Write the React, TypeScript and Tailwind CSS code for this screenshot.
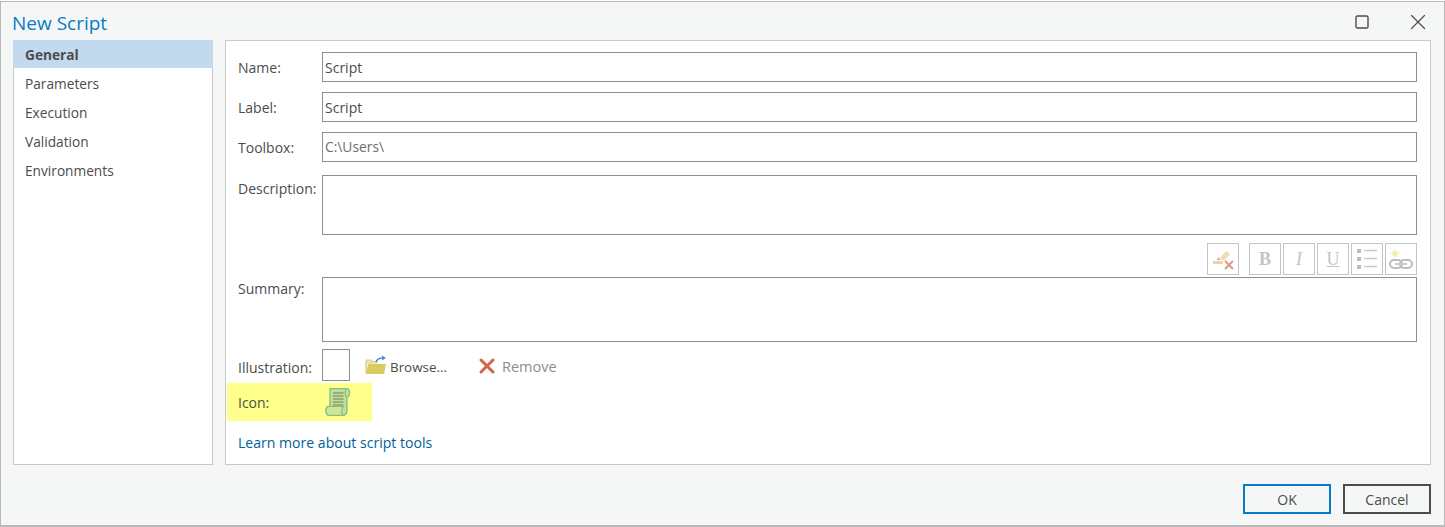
import React from "react";
import { X, Square } from "lucide-react";

const font = "font-['Open_Sans','Noto_Sans',sans-serif]";

const navItems = ["General", "Parameters", "Execution", "Validation", "Environments"];

type FieldProps = {
  label: string;
  value: string;
  muted?: boolean;
};

// One line text field with its label
const Field: React.FC<FieldProps> = ({ label, value, muted }) => (
  <div className="flex h-[30px] items-center">
    <span className="w-[84px] shrink-0 text-[14px] text-[#4c4c4c]">{label}</span>
    <div
      className={`flex h-full flex-1 items-center border border-[#8f8f8f] pl-[2px] ${
        muted ? "text-[13.8px] text-[#6e6e6e]" : "text-[14px] text-[#4c4c4c]"
      }`}
    >
      {value}
    </div>
  </div>
);

const ToolButton: React.FC<{ children: React.ReactNode; className?: string }> = ({
  children,
  className = "",
}) => (
  <div
    className={`flex h-[32px] w-[32px] items-center justify-center border border-[#c4c4c4] ${className}`}
  >
    {children}
  </div>
);

const ClearIcon = () => (
  <svg width="24" height="24" viewBox="0 0 24 24">
    <path d="M9 11 L15 4 L19 7 L13 14 Z" fill="#f3d9b4" />
    <path d="M2 14 H12 V17 H2 Z" fill="#f4cfa6" />
    <path d="M7 10 L10 13 L6 13 Z" fill="#b5b5b5" />
    <path d="M14 14 L22 22 M22 14 L14 22" stroke="#dc9a88" strokeWidth="2" />
  </svg>
);

const ListIcon = () => (
  <svg width="24" height="24" viewBox="0 0 24 24">
    <rect x="2" y="2" width="4" height="4" fill="#bdbdbd" />
    <rect x="2" y="10" width="4" height="4" fill="#bdbdbd" />
    <rect x="2" y="18" width="4" height="4" fill="#bdbdbd" />
    <path d="M9 3.5 H22 M9 11.5 H22 M9 19.5 H22" stroke="#c9c9c9" strokeWidth="1.5" />
  </svg>
);

const LinkIcon = () => (
  <svg width="24" height="24" viewBox="0 0 24 24">
    <path d="M6 2 V11 M1.5 6.5 H10.5 M3 3.5 L9 9.5 M9 3.5 L3 9.5" stroke="#efe6a4" strokeWidth="1" />
    <circle cx="6" cy="6.5" r="2.4" fill="#f5eeb0" />
    <rect x="1" y="13" width="12" height="8" rx="4" fill="none" stroke="#bdbdbd" strokeWidth="2" />
    <rect x="11" y="13" width="12" height="8" rx="4" fill="none" stroke="#bdbdbd" strokeWidth="2" />
    <path d="M6 17 H18" stroke="#c9c9c9" strokeWidth="2" />
  </svg>
);

const FolderIcon = () => (
  <svg width="22" height="20" viewBox="0 0 22 20">
    <path d="M1 18 V5 H7 L8 6.5 H12 V8 H1 Z" fill="#f3e7b2" stroke="#d8c676" strokeWidth="0.8" />
    <path d="M1 19 L3 9 H21 L19 19 Z" fill="#dcc95f" />
    <path d="M11 7 C12 4 15 3 18 3" fill="none" stroke="#4a90d0" strokeWidth="1.6" />
    <path d="M17 0.5 L21 3 L17 5.5 Z" fill="#4a90d0" />
  </svg>
);

const ScrollIcon = () => (
  <svg width="26" height="28" viewBox="0 0 26 28">
    <path
      d="M5 0.7 H22 C25.5 0.7 25.5 9 22 9 V22 C22 25 20.5 27.3 18 27.3 H4 C0 27.3 0 18.5 4 18.5 H5 Z"
      fill="#c3e091"
      stroke="#7cc08c"
      strokeWidth="1.3"
    />
    <path d="M4 18.5 H19 C16 20 16 26 18 27.3 H4 C0 27.3 0 18.5 4 18.5 Z" fill="#d3e68e" stroke="#7cc08c" strokeWidth="1.2" />
    <path d="M21.5 1 C19.5 2.5 19.5 7.5 22 9" fill="none" stroke="#7cc08c" strokeWidth="1.2" />
    <path d="M8 5 H18.5 M8 8 H18.5 M8 11 H18.5 M8 14 H18.5 M8 17 H18.5" stroke="#8b9a7c" strokeWidth="1.4" />
  </svg>
);

export default function App() {
  return (
    <div
      className={`${font} mt-px flex h-[526px] w-[1445px] flex-col border border-[#b9b9b9] border-b-[2px] bg-[#f5f7f7]`}
    >
      {/* Title bar */}
      <div className="flex h-[38px] shrink-0 items-center justify-between pl-[11px] pr-[13px]">
        <h1 className="mt-[4px] text-[19px] leading-none text-[#0a7ac6]">New Script</h1>
        <div className="mt-[2px] flex items-center gap-[35px] text-[#4c4c4c]">
          <Square size={16} strokeWidth={1.4} absoluteStrokeWidth />
          <X size={26} strokeWidth={1.2} absoluteStrokeWidth />
        </div>
      </div>

      <div className="flex h-[425px] shrink-0 gap-[12px] pl-[12px] pr-[13px]">
        {/* Left nav */}
        <aside className="w-[200px] shrink-0 border border-[#c9c9c9] border-t-0 bg-white">
          <ul className="text-[13.7px] text-[#4c4c4c]">
            {navItems.map((item, i) => (
              <li
                key={item}
                className={
                  i === 0
                    ? "-mx-px mb-px flex h-[28px] items-center bg-[#c3d9ee] pl-[12px] pt-[2px] font-bold"
                    : "flex h-[29px] items-center pl-[11px] pt-[2px]"
                }
              >
                {item}
              </li>
            ))}
          </ul>
        </aside>

        {/* Right form panel */}
        <section className="flex-1 border border-[#c9c9c9] bg-white pl-[12px] pr-[13px] pt-[11px]">
          <div className="flex flex-col gap-[10px]">
            <Field label="Name:" value="Script" />
            <Field label="Label:" value="Script" />
            <Field label="Toolbox:" value="C:\Users\" muted />
          </div>

          <div className="mt-[13px] flex h-[60px]">
            <span className="w-[84px] shrink-0 pt-[3px] text-[14px] text-[#4c4c4c]">Description:</span>
            <div className="flex-1 border border-[#8f8f8f]" />
          </div>

          <div className="mt-[8px] flex justify-end gap-[2px]">
            <ToolButton className="mr-[8px]">
              <ClearIcon />
            </ToolButton>
            <ToolButton>
              <span className="font-['Liberation_Serif',serif] text-[18px] font-bold text-[#c4c4c4]">B</span>
            </ToolButton>
            <ToolButton>
              <span className="font-['Liberation_Serif',serif] text-[18px] italic text-[#c4c4c4]">I</span>
            </ToolButton>
            <ToolButton>
              <span className="font-['Liberation_Serif',serif] text-[18px] text-[#c4c4c4] underline">U</span>
            </ToolButton>
            <ToolButton>
              <ListIcon />
            </ToolButton>
            <ToolButton>
              <LinkIcon />
            </ToolButton>
          </div>

          <div className="mt-[2px] flex h-[65px]">
            <span className="w-[84px] shrink-0 pt-[1px] text-[14px] text-[#4c4c4c]">Summary:</span>
            <div className="flex-1 border border-[#8f8f8f]" />
          </div>

          <div className="mt-[7px] flex h-[32px] items-center text-[14px]">
            <span className="w-[84px] shrink-0 pt-[4px] text-[#4c4c4c]">Illustration:</span>
            <div className="h-full w-[28px] border border-[#8f8f8f]" />
            <span className="ml-[15px]">
              <FolderIcon />
            </span>
            <span className="ml-[3px] mt-[4px] text-[13.4px] text-[#4c4c4c]">Browse...</span>
            <X size={24} strokeWidth={3} className="ml-[28px] mt-[2px] text-[#d0654a]" />
            <span className="ml-[3px] mt-[4px] text-[14.5px] text-[#8c8c8c]">Remove</span>
          </div>

          <div className="mt-[2px] -ml-[11px] flex h-[38px] w-[145px] items-center bg-[#ffff8c] pl-[11px]">
            <span className="w-[87px] shrink-0 text-[14px] text-[#4c4c4c]">Icon:</span>
            <ScrollIcon />
          </div>

          <a className="mt-[11px] block text-[14.07px] text-[#00619b]">Learn more about script tools</a>
        </section>
      </div>

      {/* Footer buttons */}
      <div className="flex flex-1 items-start justify-end gap-[12px] pr-[13px] pt-[19px] text-[14px] text-[#4c4c4c]">
        <button className="h-[30px] w-[88px] border-2 border-[#0a7ac6]">OK</button>
        <button className="h-[30px] w-[88px] border-2 border-[#4c4c4c]">Cancel</button>
      </div>
    </div>
  );
}
